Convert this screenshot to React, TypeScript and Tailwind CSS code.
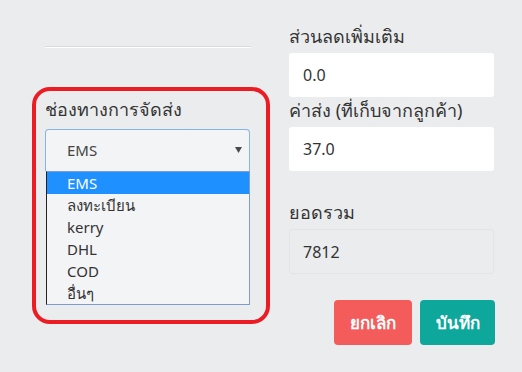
import { FC } from 'react'

const OPTIONS = ['EMS', 'ลงทะเบียน', 'kerry', 'DHL', 'COD', 'อื่นๆ']

const Field: FC<{ label: string; value: string; readOnly?: boolean; className?: string }> = ({
  label,
  value,
  readOnly,
  className,
}) => (
  <div className={className}>
    <div className="h-[24px] leading-[24px] text-[18px] text-[#333]">{label}</div>
    <div
      className={
        readOnly
          ? 'mt-[5px] h-[45px] w-[205px] rounded-[3px] border border-[#e2e4e7] bg-[#ebecee] pl-[13px] flex items-center text-[16px] text-[#333]'
          : 'mt-[5px] h-[44px] w-[205px] rounded-[3px] bg-white pl-[14px] flex items-center text-[16px] text-[#333]'
      }
    >
      {value}
    </div>
  </div>
)

export default function App() {
  return (
    <div
      className="w-[522px] h-[372px] bg-[#ebecee] flex overflow-hidden"
      style={{ fontFamily: '"Noto Sans", "Open Sans", sans-serif' }}
    >
      {/* left column */}
      <div className="w-[257px] pl-[32px] flex flex-col">
        <div className="mt-[46px] ml-[13px] w-[206px] h-[2px] border-t border-[#d8d9dc] bg-white" />
        <div className="mt-[39px] w-[238px] h-[237px] border-4 border-[#ec1c24] rounded-[18px] pl-[9px] pt-[6px]">
          <div className="h-[24px] leading-[24px] text-[18px] text-[#333]">ช่องทางการจัดส่ง</div>
          <div className="mt-[8px] w-[205px] h-[42px] rounded-t-[4px] border border-b-0 border-[#86b5e4] bg-[#f3f4f6] pl-[21px] pr-[7px] flex items-center justify-between text-[15px] text-[#444]">
            <span>EMS</span>
            <svg width="7" height="6" viewBox="0 0 7 6" className="mt-[-2px]">
              <polygon points="0,0 7,0 3.5,6" fill="#4a4a4a" />
            </svg>
          </div>
          <div className="ml-px w-[204px] border border-[#7c9cd0] border-l-[#222] bg-[#f3f4f6]">
            {OPTIONS.map((o, i) => (
              <div
                key={o}
                className={
                  i === 0
                    ? 'h-[22px] pl-[20px] flex items-center text-[15px] bg-[#1e90ff] text-white'
                    : 'h-[22px] pl-[20px] flex items-center text-[15px] text-[#333]'
                }
              >
                {o}
              </div>
            ))}
          </div>
        </div>
      </div>

      {/* right column */}
      <div className="pl-[32px] pt-[24px] flex flex-col">
        <Field label="ส่วนลดเพิ่มเติม" value="0.0" />
        <Field className="mt-[1px]" label="ค่าส่ง (ที่เก็บจากลูกค้า)" value="37.0" />
        <Field className="mt-[29px]" label="ยอดรวม" value="7812" readOnly />
        <div className="mt-[26px] flex justify-end gap-[8px] w-[206px]">
          <button className="w-[78px] h-[45px] rounded-[4px] bg-[#f45b5b] text-white text-[17px] font-bold">
            ยกเลิก
          </button>
          <button className="w-[75px] h-[45px] rounded-[4px] bg-[#0da89b] text-white text-[17px] font-bold">
            บันทึก
          </button>
        </div>
      </div>
    </div>
  )
}
